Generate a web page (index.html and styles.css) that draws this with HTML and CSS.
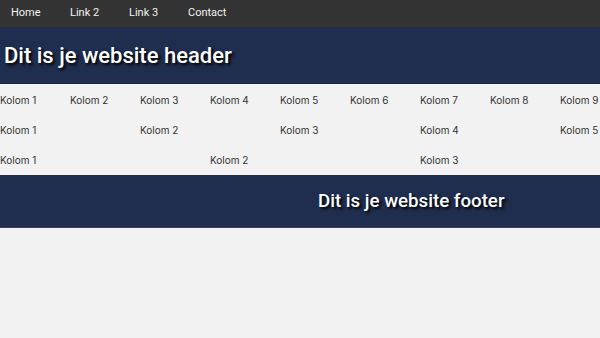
FILE: index.html
```html
<!DOCTYPE html>
<html lang="nl">
<head>
    <meta charset="UTF-8">
    <title>Website</title>
    <link rel="stylesheet" href="styles.css">
</head>
<body>
    <nav class="topnav">
        <a href="#">Home</a>
        <a href="#">Link 2</a>
        <a href="#">Link 3</a>
        <a href="#">Contact</a>
    </nav>

    <header class="header">
        <h1>Dit is je website header</h1>
    </header>

    <main class="content">
        <div class="row">
            <div class="col-1">Kolom 1</div>
            <div class="col-1">Kolom 2</div>
            <div class="col-1">Kolom 3</div>
            <div class="col-1">Kolom 4</div>
            <div class="col-1">Kolom 5</div>
            <div class="col-1">Kolom 6</div>
            <div class="col-1">Kolom 7</div>
            <div class="col-1">Kolom 8</div>
            <div class="col-1">Kolom 9</div>
        </div>
        <div class="row">
            <div class="col-2">Kolom 1</div>
            <div class="col-2">Kolom 2</div>
            <div class="col-2">Kolom 3</div>
            <div class="col-2">Kolom 4</div>
            <div class="col-2">Kolom 5</div>
        </div>
        <div class="row">
            <div class="col-3">Kolom 1</div>
            <div class="col-3">Kolom 2</div>
            <div class="col-3">Kolom 3</div>
        </div>
    </main>

    <footer class="footer">
        <h2>Dit is je website footer</h2>
    </footer>
</body>
</html>
```

FILE: styles.css
```css
body { margin: 0; background: #f2f2f2; font-family: Roboto, "Liberation Sans", sans-serif; overflow: hidden; }
.topnav { display: flex; height: 27px; background: #333; }
.topnav a { width: 48px; padding-left: 11px; line-height: 25px; font-size: 11px; color: #f2f2f2; text-decoration: none; }
.header { height: 56px; background: #1f2d4f; border-bottom: 1px solid #1b2340; display: flex; align-items: center; }
.header h1 { margin: 0 0 0 4px; font-size: 22px; font-weight: 500; color: #fff; text-shadow: 2px 2px 3px #000; }
.content { padding-top: 1px; }
.row { display: flex; height: 30px; align-items: center; white-space: nowrap; overflow: hidden; }
.row div { flex: none; font-family: Inter, "Noto Sans", sans-serif; font-size: 10px; color: #333; }
.col-1 { width: 70px; }
.col-2 { width: 140px; }
.col-3 { width: 210px; }
.footer { height: 52px; background: #1f2d4f; border-bottom: 1px solid #3a4560; display: flex; align-items: center; }
.footer h2 { margin: 0 0 0 318px; font-size: 18.7px; font-weight: 500; color: #fff; text-shadow: 2px 2px 3px #000; }
```
